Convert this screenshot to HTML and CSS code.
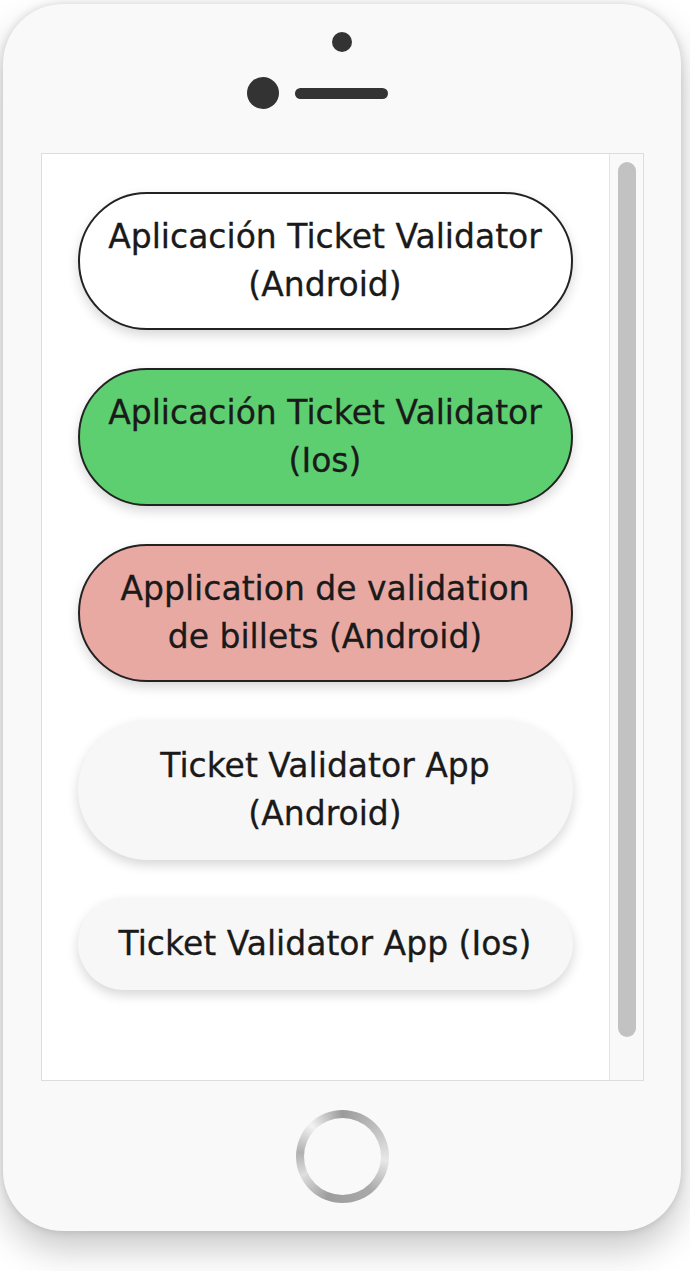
FILE: index.html
```html
<!DOCTYPE html>
<html lang="es">
<head>
<meta charset="utf-8">
<title>Ticket Validator</title>
<link rel="stylesheet" href="styles.css">
</head>
<body>
<div class="phone">
  <div class="camera"></div>
  <div class="speaker-row">
    <div class="speaker-dot"></div>
    <div class="speaker-bar"></div>
  </div>
  <div class="screen">
    <div class="screen-content">
      <div class="app-btn btn-white">Aplicación Ticket Validator<br>(Android)</div>
      <div class="app-btn btn-green">Aplicación Ticket Validator<br>(Ios)</div>
      <div class="app-btn btn-red">Application de validation<br>de billets (Android)</div>
      <div class="app-btn btn-plain">Ticket Validator App<br>(Android)</div>
      <div class="app-btn btn-plain">Ticket Validator App (Ios)</div>
    </div>
    <div class="scrollbar">
      <div class="scroll-thumb"></div>
    </div>
  </div>
  <div class="home-ring">
    <div class="home-inner"></div>
  </div>
</div>
</body>
</html>
```
FILE: styles.css
```css
* { box-sizing: border-box; }
html, body {
  margin: 0;
  padding: 0;
  background: #ffffff;
}
body {
  padding: 4px 0 0 3px;
  height: 1271px;
  font-family: "DejaVu Sans", "Noto Sans", sans-serif;
}
.phone {
  width: 678px;
  height: 1227px;
  background: #f9f9f9;
  border-radius: 60px;
  box-shadow: 0 18px 36px rgba(0, 0, 0, 0.22), 0 0 8px rgba(0, 0, 0, 0.14);
  display: flex;
  flex-direction: column;
  align-items: center;
  padding-top: 28px;
}
.camera {
  width: 20px;
  height: 20px;
  border-radius: 50%;
  background: #333333;
}
.speaker-row {
  margin-top: 25px;
  margin-right: 49px;
  height: 32px;
  display: flex;
  align-items: center;
  gap: 16px;
}
.speaker-dot {
  width: 32px;
  height: 32px;
  border-radius: 50%;
  background: #333333;
}
.speaker-bar {
  width: 93px;
  height: 11px;
  border-radius: 6px;
  background: #333333;
}
.screen {
  margin-top: 44px;
  width: 603px;
  height: 928px;
  border: 1px solid #dddddd;
  background: #ffffff;
  display: flex;
}
.screen-content {
  flex: 1;
  padding: 38px 36px 0 36px;
  display: flex;
  flex-direction: column;
  gap: 38px;
}
.app-btn {
  border-radius: 70px;
  text-align: center;
  font-size: 33px;
  line-height: 48px;
  color: #1a1a1a;
  -webkit-text-stroke: 0.3px #1a1a1a;
  padding: 19px 4px;
  border: 2px solid #222222;
  box-shadow: 0 5px 12px rgba(0, 0, 0, 0.16);
  white-space: nowrap;
}
.btn-white { background: #ffffff; }
.btn-green { background: #5ecf70; }
.btn-red { background: #e9a9a3; }
.btn-plain {
  background: #f7f7f7;
  border: none;
  padding: 22px 4px;
}
.scrollbar {
  width: 34px;
  border-left: 1px solid #e4e4e4;
  background: #f9f9f9;
  padding: 8px 7px 0 8px;
}
.scroll-thumb {
  width: 18px;
  height: 875px;
  border-radius: 9px;
  background: #c2c2c2;
}
.home-ring {
  margin-top: 29px;
  width: 93px;
  height: 93px;
  border-radius: 50%;
  padding: 8px;
  background: conic-gradient(from 0deg, #9a9a9a 0deg, #c8c8c8 60deg, #e8e8e8 95deg, #a9a9a9 140deg, #9d9d9d 200deg, #dedede 245deg, #b0b0b0 275deg, #f2f2f2 315deg, #9a9a9a 360deg);
}
.home-inner {
  width: 77px;
  height: 77px;
  border-radius: 50%;
  background: #f9f9f9;
}
```
